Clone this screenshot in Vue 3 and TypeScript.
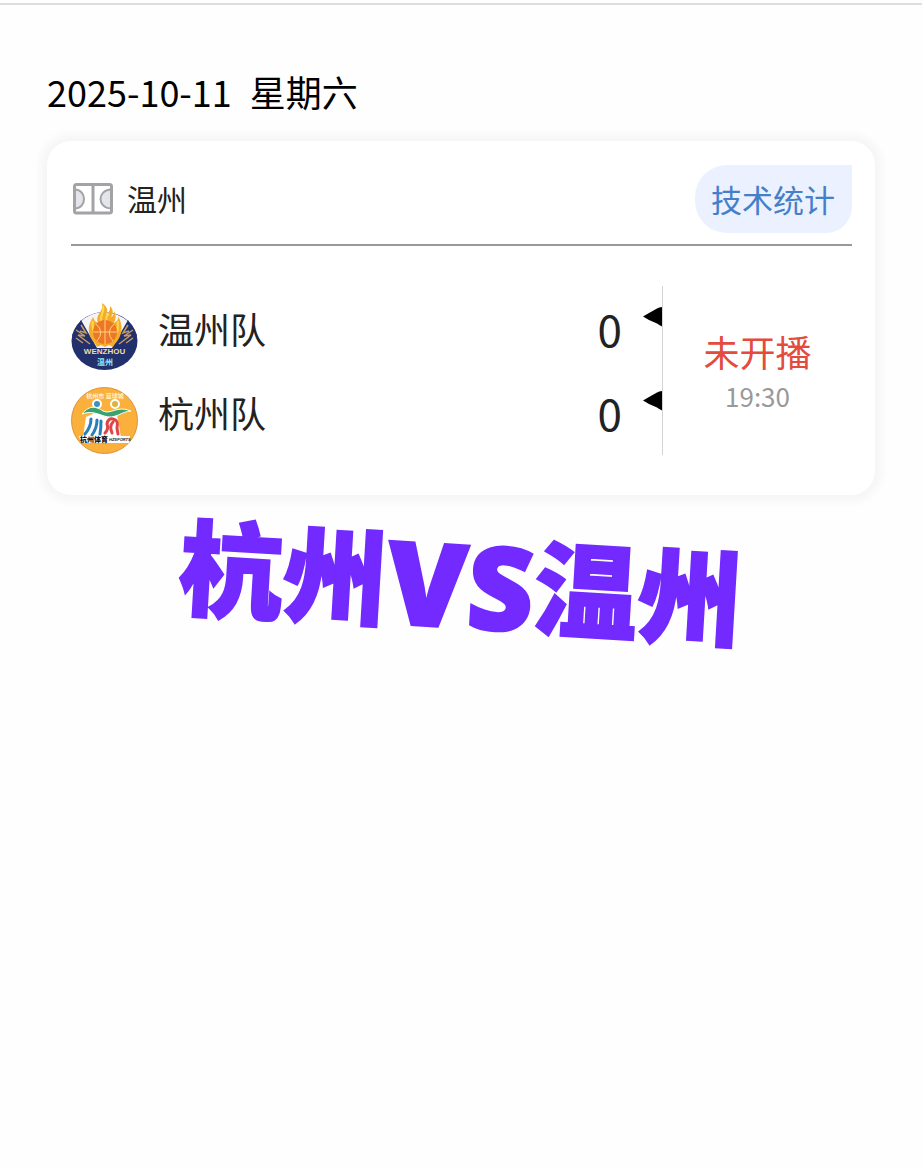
<script setup lang="ts">
interface Team {
  id: 'wenzhou' | 'hangzhou'
  name: string
  score: number
}

const teams: Team[] = [
  { id: 'wenzhou', name: '温州队', score: 0 },
  { id: 'hangzhou', name: '杭州队', score: 0 },
]
</script>

<template>
  <main class="page">
    <h1 class="date"><time datetime="2025-10-11">2025-10-11</time><span>星期六</span></h1>

    <section class="card">
      <header class="card-head">
        <svg class="court" viewBox="0 0 40 32" aria-hidden="true">
          <path d="M2 6.500C14 7 14 25 2 25.500M38 6.500C24 7 24 25 38 25.500" class="court-arc" />
          <rect x="1.500" y="1.500" width="37" height="28.500" rx="2" class="court-line" />
          <path d="M20 2v28" class="court-line" />
        </svg>
        <span class="venue">温州</span>
        <button type="button" class="stats">技术统计</button>
      </header>

      <div class="match">
        <ul class="teams">
          <li v-for="team in teams" :key="team.id" class="team">
            <svg v-if="team.id === 'wenzhou'" class="logo" viewBox="0 0 67 67" aria-hidden="true">
              <ellipse cx="33.500" cy="38" rx="33" ry="29" fill="#22306e" />
              <path d="M9 19Q20 9 33 9T58 19L45 45H22Z" fill="#f4f4f6" />
              <path d="M10 17L26 45H10L1 32ZM57 17L41 45H57L66 32Z" fill="#22306e" />
              <path d="M5 27l9 6-7-1 12 9M10 22l5 8-6-2M5 35l7 5M62 27l-9 6 7-1-12 9M57 22l-5 8 6-2M62 35l-7 5" fill="none" stroke="#c39a63" stroke-width="1.500" />
              <path d="M18 29C17 22 20 18 22 14C23 17 24 19 27 20C24 11 33 9 31 0C37 4 37 8 35 12C39 9 39 6 39 3C43 7 42 11 40 14C43 13 43 10 43 8C46 13 44 17 43 20C47 18 48 15 47 13C51 20 51 26 50 30C48 38 43 41 42 44L38 42L34 44L30 42L26 44C25 40 19 37 18 29Z" fill="#f4ac2a" />
              <path d="M32 3C34 8 29 12 30 18M38 11C34 14 35 17 37 19M22 18C20 24 23 24 22 28M47 18C46 23 48 25 46 29" stroke="#ffd84a" stroke-width="2" fill="none" />
              <circle cx="34" cy="29" r="12" fill="#ec7725" />
              <path d="M34 17v24M22 29h24M25 21Q34 29 26 38M43 21Q34 29 42 38" fill="none" stroke="#ffd184" stroke-width="1" />
              <text x="33.500" y="51" class="crest-latin">WENZHOU</text>
              <text x="34" y="62" class="crest-cn">温州</text>
            </svg>
            <svg v-else class="logo" viewBox="0 0 67 67" aria-hidden="true">
              <circle cx="33.500" cy="33.500" r="33" fill="#fbb03b" stroke="#d9943d" />
              <text x="34" y="11" class="badge-top">杭州市 篮球城</text>
              <path d="M15 30L28 24L46 28L50 50H12Z" fill="#fff" />
              <circle cx="26" cy="17" r="4" fill="#3c91bd" stroke="#fff" stroke-width="2" />
              <circle cx="44" cy="17" r="4" fill="#d9b53b" stroke="#fff" stroke-width="2" />
              <path d="M11 27C19 17 26 20 32 24C40 28 46 18 60 24C51 24 44 33 33 29C24 26 20 24 11 27Z" fill="#38a36d" stroke="#fff" />
              <path d="M20 32Q20 40 14 47M26 33Q26 41 21 48M30 34Q30 41 29 47" fill="none" stroke="#267fb8" stroke-width="3" stroke-linecap="round" />
              <path d="M34 46Q38 42 36 37Q37 31 42 32Q48 33 46 41L47 47M42 35Q38 39 41 46" fill="none" stroke="#df4547" stroke-width="3" stroke-linecap="round" />
              <path d="M8 49H59L58 56H10Z" fill="#fff" />
              <text x="9" y="55" class="badge-cn">杭州体育</text>
              <text x="38" y="54" class="badge-latin">HZSPORTS</text>
            </svg>
            <span class="name">{{ team.name }}</span>
            <span class="score">{{ team.score }}</span>
            <svg class="marker" viewBox="0 0 19 20" aria-hidden="true">
              <path d="M0 9.500L6 6L14 1.500Q16 0 19 0V19.500Q16 18 14 16.500L6 13Z" />
            </svg>
          </li>
        </ul>
        <div class="state">
          <strong class="status">未开播</strong>
          <time class="time" datetime="19:30">19:30</time>
        </div>
      </div>
    </section>

    <p class="banner">杭州<span class="versus">VS</span>温州</p>
  </main>
</template>

<style>
body {
  margin: 0;
  background: #fefefe;
}
</style>

<style scoped>
.page {
  border-top: 2px solid #dedede;
  margin-top: 3px;
  padding: 60px 47px 40px;
  font-family: "Noto Sans CJK SC", "Noto Sans", sans-serif;
  color: #222;
}
.date {
  display: flex;
  gap: 18px;
  margin: 0 0 24px;
  font-size: 36px;
  line-height: 52px;
  font-weight: 400;
  color: #000;
}
.card {
  padding: 24px 23px 40px 24px;
  border-radius: 24px;
  background: #fff;
  box-shadow: 0 0 8px 7px rgba(0, 0, 0, 0.035);
}
.card-head {
  display: flex;
  align-items: center;
  padding-bottom: 11px;
  border-bottom: 2px solid #999;
}
.court {
  width: 40px;
  height: 32px;
  margin: 0 14px 0 2px;
}
.court-line {
  fill: none;
  stroke: #a2a2a7;
  stroke-width: 3;
}
.court-arc {
  fill: #e4e5ea;
  stroke: #a2a2a7;
  stroke-width: 2;
}
.venue {
  flex: 1;
  padding-bottom: 2px;
  font-size: 30px;
  line-height: 44px;
}
.stats {
  height: 68px;
  padding: 0 17px 0 16px;
  border: 0;
  border-radius: 32px 0 26px 32px;
  background: #ebf1fe;
  color: #467fc9;
  font-family: inherit;
  font-size: 31px;
  line-height: 44px;
}
.match {
  display: flex;
  margin-top: 40px;
}
.teams {
  flex: 1;
  margin: 0;
  padding: 0 0 1px;
  list-style: none;
  border-right: 1px solid #d4d4d4;
}
.team {
  display: flex;
  align-items: flex-end;
  height: 84px;
}
.logo {
  width: 67px;
  height: 67px;
  margin-right: 20px;
}
.name {
  flex: 1;
  font-size: 36px;
  line-height: 84px;
}
.score {
  margin-right: 21px;
  font-size: 44px;
  line-height: 84px;
}
.marker {
  width: 19px;
  height: 20px;
  margin-bottom: 43px;
  fill: #000;
}
.crest-latin {
  font: 700 8px "Liberation Sans", sans-serif;
  text-anchor: middle;
  fill: #eddca5;
}
.crest-cn {
  font: 700 8px "Noto Sans CJK SC", sans-serif;
  text-anchor: middle;
  fill: #8eeaff;
}
.badge-top {
  font: 700 6px "Noto Sans CJK SC", sans-serif;
  text-anchor: middle;
  fill: #fff2c9;
}
.badge-cn {
  font: 900 7px "Noto Sans CJK SC", sans-serif;
  fill: #111;
}
.badge-latin {
  font: italic 700 4px "Liberation Sans", sans-serif;
  fill: #222;
}
.state {
  display: flex;
  flex-direction: column;
  align-items: center;
  justify-content: center;
  width: 189px;
}
.status {
  font-size: 36px;
  font-weight: 400;
  line-height: 50px;
  color: #e34b3c;
}
.time {
  font-size: 26px;
  line-height: 40px;
  color: #999;
}
.banner {
  margin: 8px 0 0;
  font-size: 104px;
  font-weight: 900;
  line-height: 150px;
  text-align: center;
  white-space: nowrap;
  color: #722aff;
  -webkit-text-stroke: 2px #722aff;
  transform: rotate(3.4deg);
}
.versus {
  font-family: "Noto Sans", sans-serif;
  font-size: 116px;
  line-height: 100px;
  vertical-align: -5px;
}
</style>
